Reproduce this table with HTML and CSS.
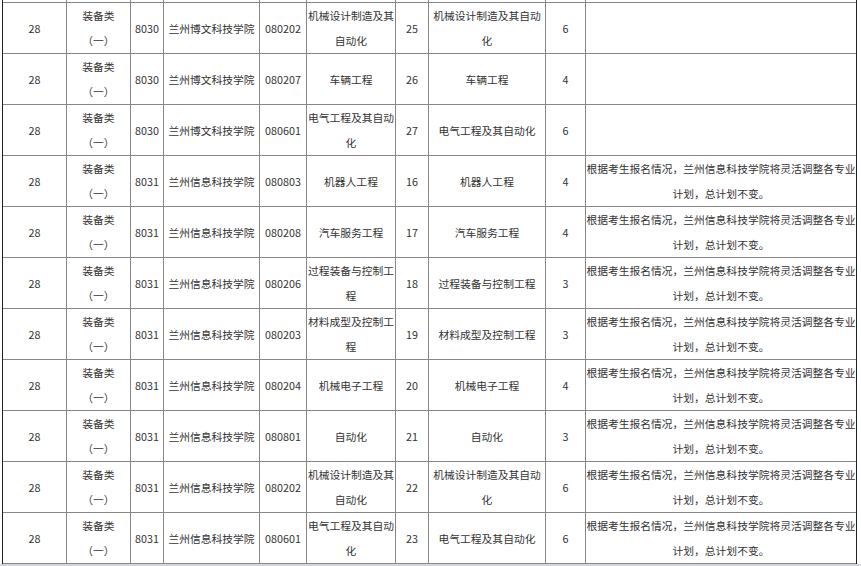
FILE: index.html
```html
<!DOCTYPE html>
<html lang="zh-CN">
<head>
<meta charset="utf-8">
<title>专业计划表</title>
<link rel="stylesheet" href="styles.css">
</head>
<body>
<div class="frame">
  <div class="row spacer">
    <div class="c"></div><div class="c"></div><div class="c"></div><div class="c"></div><div class="c"></div><div class="c"></div><div class="c"></div><div class="c"></div><div class="c"></div><div class="c"></div>
  </div>
  <div class="row">
    <div class="c">28</div><div class="c">装备类<br>（一）</div><div class="c">8030</div><div class="c">兰州博文科技学院</div><div class="c">080202</div><div class="c">机械设计制造及其自动化</div><div class="c">25</div><div class="c">机械设计制造及其自动化</div><div class="c">6</div><div class="c"></div>
  </div>
  <div class="row">
    <div class="c">28</div><div class="c">装备类<br>（一）</div><div class="c">8030</div><div class="c">兰州博文科技学院</div><div class="c">080207</div><div class="c">车辆工程</div><div class="c">26</div><div class="c">车辆工程</div><div class="c">4</div><div class="c"></div>
  </div>
  <div class="row">
    <div class="c">28</div><div class="c">装备类<br>（一）</div><div class="c">8030</div><div class="c">兰州博文科技学院</div><div class="c">080601</div><div class="c">电气工程及其自动化</div><div class="c">27</div><div class="c">电气工程及其自动化</div><div class="c">6</div><div class="c"></div>
  </div>
  <div class="row">
    <div class="c">28</div><div class="c">装备类<br>（一）</div><div class="c">8031</div><div class="c">兰州信息科技学院</div><div class="c">080803</div><div class="c">机器人工程</div><div class="c">16</div><div class="c">机器人工程</div><div class="c">4</div><div class="c">根据考生报名情况，兰州信息科技学院将灵活调整各专业计划，总计划不变。</div>
  </div>
  <div class="row">
    <div class="c">28</div><div class="c">装备类<br>（一）</div><div class="c">8031</div><div class="c">兰州信息科技学院</div><div class="c">080208</div><div class="c">汽车服务工程</div><div class="c">17</div><div class="c">汽车服务工程</div><div class="c">4</div><div class="c">根据考生报名情况，兰州信息科技学院将灵活调整各专业计划，总计划不变。</div>
  </div>
  <div class="row">
    <div class="c">28</div><div class="c">装备类<br>（一）</div><div class="c">8031</div><div class="c">兰州信息科技学院</div><div class="c">080206</div><div class="c">过程装备与控制工程</div><div class="c">18</div><div class="c">过程装备与控制工程</div><div class="c">3</div><div class="c">根据考生报名情况，兰州信息科技学院将灵活调整各专业计划，总计划不变。</div>
  </div>
  <div class="row">
    <div class="c">28</div><div class="c">装备类<br>（一）</div><div class="c">8031</div><div class="c">兰州信息科技学院</div><div class="c">080203</div><div class="c">材料成型及控制工程</div><div class="c">19</div><div class="c">材料成型及控制工程</div><div class="c">3</div><div class="c">根据考生报名情况，兰州信息科技学院将灵活调整各专业计划，总计划不变。</div>
  </div>
  <div class="row">
    <div class="c">28</div><div class="c">装备类<br>（一）</div><div class="c">8031</div><div class="c">兰州信息科技学院</div><div class="c">080204</div><div class="c">机械电子工程</div><div class="c">20</div><div class="c">机械电子工程</div><div class="c">4</div><div class="c">根据考生报名情况，兰州信息科技学院将灵活调整各专业计划，总计划不变。</div>
  </div>
  <div class="row">
    <div class="c">28</div><div class="c">装备类<br>（一）</div><div class="c">8031</div><div class="c">兰州信息科技学院</div><div class="c">080801</div><div class="c">自动化</div><div class="c">21</div><div class="c">自动化</div><div class="c">3</div><div class="c">根据考生报名情况，兰州信息科技学院将灵活调整各专业计划，总计划不变。</div>
  </div>
  <div class="row">
    <div class="c">28</div><div class="c">装备类<br>（一）</div><div class="c">8031</div><div class="c">兰州信息科技学院</div><div class="c">080202</div><div class="c">机械设计制造及其自动化</div><div class="c">22</div><div class="c">机械设计制造及其自动化</div><div class="c">6</div><div class="c">根据考生报名情况，兰州信息科技学院将灵活调整各专业计划，总计划不变。</div>
  </div>
  <div class="row">
    <div class="c">28</div><div class="c">装备类<br>（一）</div><div class="c">8031</div><div class="c">兰州信息科技学院</div><div class="c">080601</div><div class="c">电气工程及其自动化</div><div class="c">23</div><div class="c">电气工程及其自动化</div><div class="c">6</div><div class="c">根据考生报名情况，兰州信息科技学院将灵活调整各专业计划，总计划不变。</div>
  </div>
</div>
<div class="strip"></div>
</body>
</html>
```

FILE: styles.css
```css
html, body {
  margin: 0;
  padding: 0;
  background: #ffffff;
}
body {
  font-family: "Noto Sans CJK SC", "Microsoft YaHei", sans-serif;
  font-size: 10.78px;
  line-height: 25px;
  color: #333333;
  overflow: hidden;
  height: 566px;
}
.frame {
  margin-left: 2px;
  width: 855px;
  box-sizing: border-box;
  border-left: 1px solid #1e1e1e;
  border-right: 1px solid #1e1e1e;
}
.row {
  display: grid;
  grid-template-columns: 64px 64px 33px 96px 47px 89px 33px 117px 40px 270px;
  height: 51px;
}
.row.spacer {
  height: 3px;
}
.c {
  box-sizing: border-box;
  border-right: 1px solid #878787;
  border-bottom: 1px solid #878787;
  display: flex;
  align-items: center;
  justify-content: center;
  text-align: center;
  overflow: hidden;
}
.c:last-child {
  border-right: none;
}
.strip {
  height: 2px;
  background: #cdd6e1;
}
```
